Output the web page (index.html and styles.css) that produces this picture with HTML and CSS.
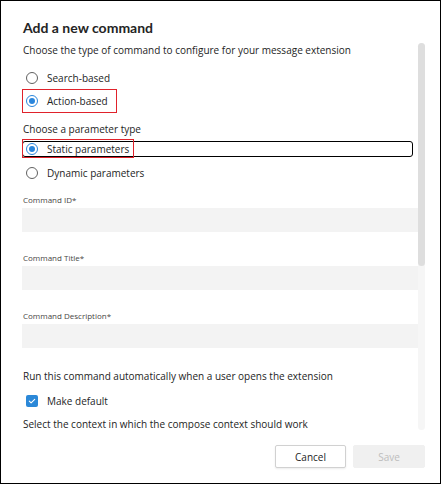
FILE: index.html
```html
<!DOCTYPE html>
<html>
<head>
<meta charset="utf-8">
<link rel="stylesheet" href="styles.css">
</head>
<body>
<div class="frame">
  <h1 class="title">Add a new command</h1>
  <div class="scroll">
    <div class="content">
      <p class="text intro">Choose the type of command to configure for your message extension</p>
      <div class="row r-search"><span class="radio"></span><span class="lbl">Search-based</span></div>
      <div class="row r-action"><span class="radio on"></span><span class="lbl">Action-based</span><span class="mark mark-action"></span></div>
      <p class="text ptype">Choose a parameter type</p>
      <div class="row r-static"><span class="radio on"></span><span class="lbl">Static parameters</span><span class="mark mark-static"></span></div>
      <div class="row r-dynamic"><span class="radio"></span><span class="lbl">Dynamic parameters</span></div>
      <div class="field f-first"><span class="flabel">Command ID*</span><div class="input"></div></div>
      <div class="field"><span class="flabel">Command Title*</span><div class="input"></div></div>
      <div class="field"><span class="flabel">Command Description*</span><div class="input"></div></div>
      <p class="text run">Run this command automatically when a user opens the extension</p>
      <div class="row r-check"><span class="check"><svg width="12" height="12" viewBox="0 0 12 12"><path d="M3.3 6.2 L5.1 7.9 L8.7 4.3" fill="none" stroke="#fff" stroke-width="1.1" stroke-linecap="round" stroke-linejoin="round"/></svg></span><span class="lbl">Make default</span></div>
      <p class="text select">Select the context in which the compose context should work</p>
    </div>
    <div class="scrollbar"><div class="thumb"></div></div>
  </div>
  <div class="footer">
    <button class="btn cancel">Cancel</button>
    <button class="btn save">Save</button>
  </div>
</div>
</body>
</html>
```
FILE: styles.css
```css
* { box-sizing: border-box; }
html, body { margin: 0; padding: 0; background: #fff; }
body { font-family: "Open Sans", "Noto Sans", sans-serif; color: #242424; }
.frame {
  width: 441px; height: 484px;
  border: 1px solid #000;
  padding: 17px 15px 0 21px;
  display: flex; flex-direction: column;
}
.title {
  margin: 0 0 0 1px;
  font-family: "Lato", "Open Sans", sans-serif;
  font-size: 14px; line-height: 20px; font-weight: 700;
  height: 20px;
}
.scroll {
  margin-top: 5px;
  height: 387px;
  display: flex;
  overflow: hidden;
}
.content { flex: 1; min-width: 0; }
.scrollbar {
  width: 7px; height: 387px;
  background: #f6f6f6; border-radius: 4px;
}
.thumb { height: 223px; background: #dedede; border-radius: 4px; }
.text { margin: 0; padding-left: 1px; font-size: 10px; line-height: 14px; height: 14px; white-space: nowrap; }
.intro { margin-top: 0; }
.row {
  position: relative;
  display: flex; align-items: center;
  height: 20px; padding-left: 4px;
  font-size: 10px;
}
.lbl { margin-left: 9px; white-space: nowrap; }
.radio {
  width: 12px; height: 12px; border-radius: 50%;
  border: 1px solid #616161; flex: none;
  position: relative;
}
.radio.on { border-color: #2a86dc; }
.radio.on::after {
  content: ""; position: absolute; left: 2px; top: 2px;
  width: 6px; height: 6px; border-radius: 50%; background: #2a86dc;
}
.r-search { margin-top: 11px; }
.r-action { margin-top: 1px; height: 24px; }
.ptype { margin-top: 9px; }
.r-static {
  margin-top: 5px; height: 16px; padding-left: 3px;
  border: 1px solid #000; border-radius: 3px; margin-right: 5px;
}
.r-dynamic { margin-top: 6px; }
.mark { position: absolute; border: 1px solid #e0222b; }
.mark-action { left: 0; top: 0; width: 95px; height: 24px; }
.mark-static { left: -1px; top: -3px; width: 112px; height: 19px; }
.field { margin-top: 20px; }
.f-first { margin-top: 11px; }
.flabel {
  display: block; height: 12px; line-height: 12px;
  font-size: 8px; color: #484644; padding-left: 1px; white-space: nowrap;
}
.input { margin-top: 2px; height: 24px; background: #f3f3f3; }
.run { margin-top: 21px; }
.r-check { margin-top: 8px; }
.check {
  width: 12px; height: 12px; border-radius: 2px; background: #2b88d8;
  flex: none; display: flex;
}
.select { margin-top: 6px; }
.footer {
  margin-top: 15px;
  display: flex; justify-content: flex-end; gap: 7px;
}
.btn {
  height: 23px; font-family: inherit; font-size: 10px; border-radius: 2px;
  padding: 0; margin: 0;
}
.cancel {
  width: 71px; background: #fff; color: #242424;
  border: 1px solid #d1d1d1; box-shadow: 0 1px 2px rgba(0,0,0,0.08);
}
.save { width: 72px; background: #f0f0f0; color: #bdbdbd; border: 1px solid #f0f0f0; }
```
